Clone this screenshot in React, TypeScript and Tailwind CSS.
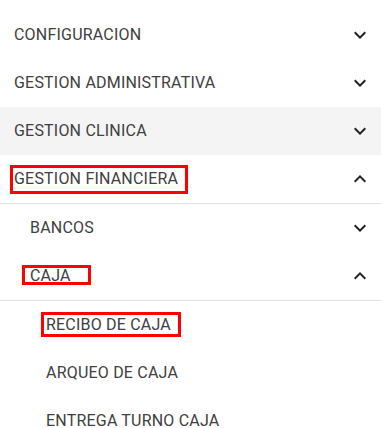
type Item = {
  label: string;
  level: 0 | 1 | 2;
  open?: boolean;
  leaf?: boolean;
  active?: boolean;
  divider?: boolean;
  mark?: string;
};

// mark = red highlight box drawn around a label (annotation)
const items: Item[] = [
  { label: "CONFIGURACION", level: 0 },
  { label: "GESTION ADMINISTRATIVA", level: 0 },
  { label: "GESTION CLINICA", level: 0, active: true },
  {
    label: "GESTION FINANCIERA",
    level: 0,
    open: true,
    divider: true,
    mark: "-left-[4px] -right-[10px] -top-[6px] -bottom-[7px]",
  },
  { label: "BANCOS", level: 1 },
  {
    label: "CAJA",
    level: 1,
    open: true,
    divider: true,
    mark: "-left-[8px] -right-[20px] -top-[3px] -bottom-[1px]",
  },
  {
    label: "RECIBO DE CAJA",
    level: 2,
    leaf: true,
    mark: "-left-[5px] -right-[10px] -top-[5px] -bottom-[4px]",
  },
  { label: "ARQUEO DE CAJA", level: 2, leaf: true },
  { label: "ENTREGA TURNO CAJA", level: 2, leaf: true },
];

const indent = ["pl-[14px]", "pl-[30px]", "pl-[46px]"];

function Chevron({ open }: { open?: boolean }) {
  return (
    <svg viewBox="0 0 24 24" className="w-6 h-6 text-[#222]" fill="currentColor">
      {open ? (
        <path d="M7.41 15.41L12 10.83l4.59 4.58L18 14l-6-6-6 6z" />
      ) : (
        <path d="M7.41 8.59L12 13.17l4.59-4.58L18 10l-6 6-6-6z" />
      )}
    </svg>
  );
}

export default function App() {
  return (
    <div className="w-[381px] h-[428px] overflow-hidden bg-white pt-[11px] font-['Roboto',sans-serif]">
      <ul>
        {items.map((item) => (
          <li
            key={item.label}
            className={`box-content h-12 flex items-center justify-between pr-[9px] ${indent[item.level]} ${
              item.active ? "bg-[#f4f4f4]" : ""
            } ${item.divider ? "border-b border-[#e0e0e0]" : ""}`}
          >
            <span className="relative text-[16px] leading-[16px] tracking-[0.2px] text-[#404040]">
              {item.label}
              {item.mark && (
                <span className={`absolute border-[3px] border-[#ff0000] ${item.mark}`} />
              )}
            </span>
            {!item.leaf && <Chevron open={item.open} />}
          </li>
        ))}
      </ul>
    </div>
  );
}
